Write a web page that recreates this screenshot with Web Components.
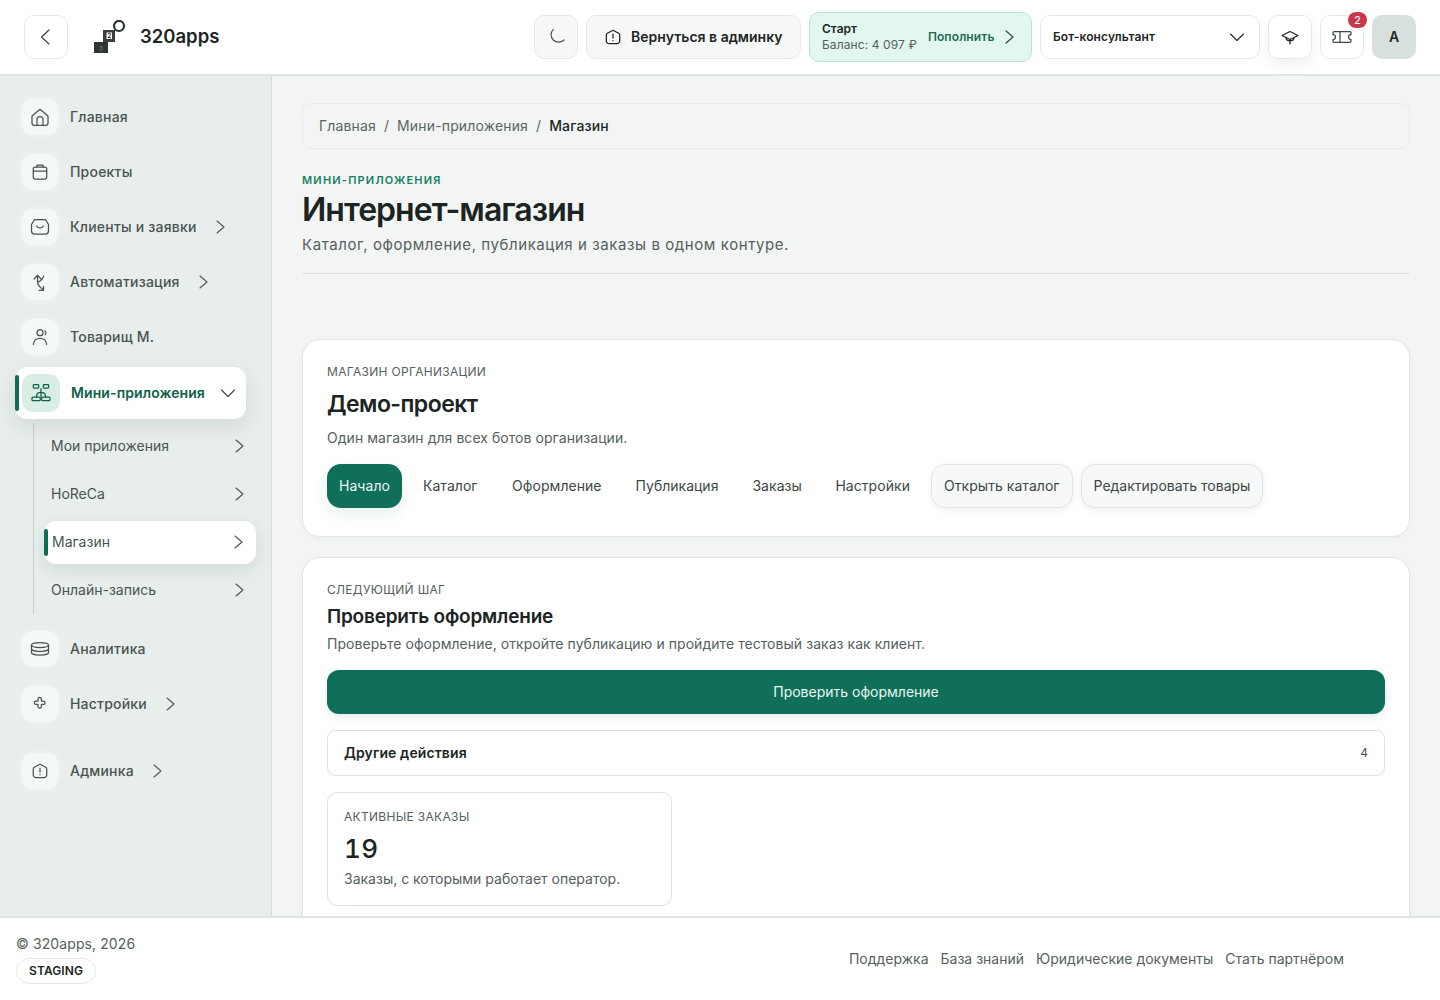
<!DOCTYPE html>
<html lang="ru">
<head>
<meta charset="utf-8">
<title>320apps</title>
<style>
  html, body { margin: 0; height: 100%; }
  body { font-family: Inter, "Noto Sans", sans-serif; color: #1b2422; background: #f2f5f4; }
</style>
</head>
<body>
<app-shell></app-shell>
<script>
// all icons are drawn on a 24 grid, 1 unit = 1px
const svg = (inner, sw = 1.25) => `<svg width="24" height="24" viewBox="0 0 24 24" fill="none" stroke="currentColor" stroke-width="${sw}" stroke-linecap="round" stroke-linejoin="round" style="display:block;flex:none">${inner}</svg>`
const icons = {
  back: '<path d="M15 5l-7.500 7 7.500 7"/>',
  right: '<path d="M9 6l7 6-7 6"/>',
  down: '<path d="M5.500 9l6.500 6.500L18.500 9"/>',
  home: '<path d="M4 11l8-6.700 8 6.700v7a2.300 2.300 0 0 1-2.300 2.300H6.300A2.300 2.300 0 0 1 4 18z"/><path d="M9 20v-5.500a3 3 0 0 1 6 0V20"/>',
  case: '<rect x="5.300" y="7" width="13.400" height="12" rx="2"/><path d="M5.300 11h13.400M9 7V5.200h6V7"/>',
  inbox: '<path d="M6.500 4.500h11l3 5v6.500a3 3 0 0 1-3 3h-11a3 3 0 0 1-3-3V9.500z"/><path d="M8.500 11c1.500 2.500 5.500 2.500 7 0"/>',
  flow: '<path d="M6 9l3.500-3.700L13 9M9.500 5.300V12c0 3 2 5 5.500 7.500"/><path d="M11 20.300h4.500v-4M15.500 6c0 3-2 4.200-5 6"/>',
  user: '<circle cx="12" cy="7.700" r="3"/><path d="M5.300 19.300c.5-4 3.500-6 6.700-6s6.200 2 6.700 6"/><path d="M16.800 6c1.400.5 1.400 3 .4 3.700"/>',
  apps: '<rect x="4.300" y="3.700" width="5.400" height="3.400" rx=".8"/><rect x="14.300" y="3.700" width="5.400" height="3.400" rx=".8"/><rect x="3" y="16" width="8.300" height="3.700" rx="1"/><rect x="12.700" y="16" width="8.300" height="3.700" rx="1"/><path d="M7.500 16c0-3 1.500-4.500 3-4.500h3c1.500 0 3 1.500 3 4.500M12 7.500v8.500"/>',
  db: '<ellipse cx="12" cy="8" rx="8.500" ry="2.500"/><path d="M3.500 8v7.500c0 1.500 3.800 2.700 8.500 2.700s8.500-1.200 8.500-2.700V8M3.500 11.800c0 1.500 3.800 2.700 8.500 2.700s8.500-1.200 8.500-2.700"/>',
  gear: '<path d="M10 9V7a1.700 1.700 0 0 1 3.400 0v2h2a1.700 1.700 0 0 1 0 3.400h-2v2a1.700 1.700 0 0 1-3.400 0v-2H8A1.700 1.700 0 0 1 8 9z"/>',
  admin: '<path d="M12 5.300l5.700 3a2 2 0 0 1 1 1.700v6a2.700 2.700 0 0 1-2.700 2.700H8A2.700 2.700 0 0 1 5.300 16v-6a2 2 0 0 1 1-1.700z"/><path d="M12 9v4M12 15.500v.2"/>',
  spin: '<path d="M9.300 4.300A6.800 6.800 0 1 0 20 15"/>',
  cap: '<path d="M12 6.500l8 4-8 4-8-4z"/><path d="M8 12.700c0 2 2 3 4 3s4-1 4-3M12 14.500V19"/>',
  ticket: '<path d="M4 6.700h16a1 1 0 0 1 1 1v1.800a2.500 2.500 0 0 0 0 5v1.800a1 1 0 0 1-1 1H4a1 1 0 0 1-1-1v-1.800a2.500 2.500 0 0 0 0-5V7.700a1 1 0 0 1 1-1z"/><path d="M10 6.700v10.600"/>'
}

class TopBar extends HTMLElement {
  constructor() {
    super()
    this.attachShadow({ mode: 'open' })
    this.shadowRoot.innerHTML = `
      <style>
        :host { display: flex; align-items: center; height: 74px; flex: none; padding: 0 24px; background: #fff; border-bottom: 2px solid #dfe4e2; position: relative; z-index: 3; }
        .btn { display: flex; align-items: center; justify-content: center; height: 44px; box-sizing: border-box; border: 1px solid #e6e9e8; border-radius: 10px; background: #fff; color: #3d4744; }
        .sq { width: 44px; flex: none; }
        .brand { display: flex; align-items: center; margin-left: 26px; font-size: 18.500px; font-weight: 600; color: #1d2624; gap: 12px; }
        .brand svg { display: block; }
        .brand span { position: relative; top: -1px; }
        .right { display: flex; align-items: center; margin-left: auto; }
        .gray { background: #f6f8f7; }
        .admin { width: 215px; margin-left: 8px; gap: 6px; justify-content: flex-start; padding-left: 14px; font-size: 14px; font-weight: 600; color: #1d2624; white-space: nowrap; }
        .plan { display: flex; align-items: center; width: 223px; height: 50px; margin-left: 8px; box-sizing: border-box; padding: 0 12px; background: #e2f7f0; border: 1px solid #b5e6d5; border-radius: 10px; white-space: nowrap; }
        .plan b { display: block; font-size: 12px; font-weight: 600; line-height: 16px; color: #1d2624; }
        .plan span { display: block; font-size: 12px; line-height: 16px; color: #56605d; letter-spacing: .1px; }
        .plan i { font-style: normal; font-size: 12px; font-weight: 600; color: #1f6b52; margin-left: 11px; margin-right: 3px; margin-bottom: 1px; letter-spacing: .1px; }
        .plan svg { color: #3d4744; }
        .select { width: 220px; margin-left: 8px; justify-content: space-between; padding: 0 10px 0 12px; font-size: 12px; font-weight: 600; color: #1d2624; letter-spacing: .1px; }
        .nudge { margin-bottom: 1px; }
        .soft { box-shadow: 0 6px 14px rgba(30, 50, 45, .07); margin-left: 8px; color: #1d2624; }
        .bell { margin-left: 8px; position: relative; }
        .bell em { position: absolute; top: -4px; right: -4px; width: 19px; height: 16px; border-radius: 8px; background: #c8374a; color: #fff; font-style: normal; font-size: 10.500px; font-weight: 500; display: flex; align-items: center; justify-content: center; }
        .avatar { width: 44px; height: 44px; margin-left: 8px; border-radius: 10px; background: #d8e0dd; display: flex; align-items: center; justify-content: center; font-size: 14px; font-weight: 600; color: #1d2624; box-sizing: border-box; padding-bottom: 1px; }
      </style>
      <div class="btn sq">${svg(icons.back)}</div>
      <div class="brand">
        <svg width="34" height="34" viewBox="0 0 34 34">
          <circle cx="25" cy="6" r="5" fill="none" stroke="#2b3230" stroke-width="2.200"/>
          <path d="M9 10h12v12H9z" fill="#3a3f3e"/>
          <rect x="12.500" y="12.500" width="5.500" height="6.500" fill="#fff"/>
          <text x="15.200" y="18.200" font-size="6.500" font-family="Inter" text-anchor="middle" fill="#222">2</text>
          <rect x="0" y="22" width="14" height="11" fill="#2f3433"/>
          <text x="7" y="30.500" font-size="6" font-family="Inter" text-anchor="middle" fill="#6e7472">3</text>
        </svg>
        <span>320apps</span>
      </div>
      <div class="right">
        <div class="btn sq gray" style="color:#4b5552">${svg(icons.spin, 1.200)}</div>
        <div class="btn gray admin"><span style="color:#1d2624;display:flex">${svg(icons.admin)}</span><span class="nudge">Вернуться в админку</span></div>
        <div class="plan">
          <div><b>Старт</b><span>Баланс: 4 097 ₽</span></div>
          <i>Пополнить</i>${svg(icons.right)}
        </div>
        <div class="btn select"><span class="nudge">Бот-консультант</span>${svg(icons.down, 1.100)}</div>
        <div class="btn sq soft">${svg(icons.cap)}</div>
        <div class="btn sq bell">${svg(icons.ticket)}<em>2</em></div>
        <div class="avatar">А</div>
      </div>
    `
  }
}
customElements.define('top-bar', TopBar)

class NavItem extends HTMLElement {
  constructor() {
    super()
    this.attachShadow({ mode: 'open' })
  }
  connectedCallback() {
    const icon = this.getAttribute('icon')
    const arrow = this.getAttribute('arrow')
    this.shadowRoot.innerHTML = `
      <style>
        :host { display: flex; align-items: center; height: 47px; margin-left: 22px; font-size: 14px; font-weight: 500; color: #4a5451; letter-spacing: .2px; }
        .ico { width: 36px; height: 36px; flex: none; border-radius: 11px; background: #f4f8f6; display: flex; align-items: center; justify-content: center; color: #4a5451; margin-right: 12px; box-shadow: 0 0 8px rgba(255,255,255,.5); }
        .arr { display: flex; margin-left: 11px; color: #4f5956; }
        :host([active]) { position: relative; height: 52px; width: 231px; margin-left: 15px; box-sizing: border-box; padding-left: 7px; background: #fff; border-radius: 12px; font-weight: 600; color: #11614a; letter-spacing: .1px; box-shadow: 0 8px 20px rgba(30,50,45,.1); }
        :host([active])::before { content: ""; position: absolute; left: 0; top: 8px; bottom: 8px; width: 4px; background: #0f6b53; border-radius: 2px; }
        :host([active]) .ico { width: 38px; height: 38px; margin-right: 11px; background: #d9ece6; color: #11614a; box-shadow: none; }
        :host([active]) .lab { margin-bottom: 2px; }
        :host([active]) .arr { color: #3d4744; }
      </style>
      <div class="ico">${svg(icons[icon])}</div>
      <span class="lab"><slot></slot></span>
      ${arrow ? `<span class="arr">${svg(icons[arrow], 1.100)}</span>` : ''}
    `
  }
}
customElements.define('nav-item', NavItem)

class SubItem extends HTMLElement {
  constructor() {
    super()
    this.attachShadow({ mode: 'open' })
    this.shadowRoot.innerHTML = `
      <style>
        :host { display: flex; align-items: center; justify-content: space-between; height: 42px; margin-bottom: 6px; padding: 0 0 0 17px; box-sizing: border-box; width: 217px; font-size: 14px; color: #4a5451; position: relative; border-radius: 12px; }
        :host([active]) { width: 212px; height: 43px; background: #fff; padding: 0 6px 3px 8px; margin: 7px 0 4px 10px; box-shadow: 0 6px 16px rgba(30,50,45,.1); }
        :host([active])::before { content: ""; position: absolute; left: 0; top: 8px; bottom: 8px; width: 4px; background: #0f6b53; border-radius: 2px; }
        span { display: flex; color: #4a5451; margin-top: 2px; }
      </style>
      <slot></slot>
      <span>${svg(icons.right, 1.100)}</span>
    `
  }
}
customElements.define('sub-item', SubItem)

class SideNav extends HTMLElement {
  constructor() {
    super()
    this.attachShadow({ mode: 'open' })
    this.shadowRoot.innerHTML = `
      <style>
        :host { display: flex; flex-direction: column; width: 272px; flex: none; box-sizing: border-box; padding-top: 17px; background: #e7eeeb; border-right: 1px solid #d5dbd9; }
        .list { display: flex; flex-direction: column; gap: 8px; }
        .subs { margin: 4px 0 11px 33px; padding-top: 1px; border-left: 1px solid #c9d0ce; width: 230px; }
        sub-item:last-child { margin-bottom: 4px; }
        .last { margin-top: 12px; }
      </style>
      <div class="list">
        <nav-item icon="home">Главная</nav-item>
        <nav-item icon="case">Проекты</nav-item>
        <nav-item icon="inbox" arrow="right">Клиенты и заявки</nav-item>
        <nav-item icon="flow" arrow="right">Автоматизация</nav-item>
        <nav-item icon="user">Товарищ М.</nav-item>
      </div>
      <nav-item icon="apps" arrow="down" active style="margin-top:7px">Мини-приложения</nav-item>
      <div class="subs">
        <sub-item>Мои приложения</sub-item>
        <sub-item>HoReCa</sub-item>
        <sub-item active>Магазин</sub-item>
        <sub-item>Онлайн-запись</sub-item>
      </div>
      <div class="list">
        <nav-item icon="db">Аналитика</nav-item>
        <nav-item icon="gear" arrow="right">Настройки</nav-item>
        <nav-item class="last" icon="admin" arrow="right">Админка</nav-item>
      </div>
    `
  }
}
customElements.define('side-nav', SideNav)

class PageHead extends HTMLElement {
  constructor() {
    super()
    this.attachShadow({ mode: 'open' })
    this.shadowRoot.innerHTML = `
      <style>
        :host { display: block; }
        .crumbs { display: flex; align-items: center; gap: 8px; height: 46px; box-sizing: border-box; padding: 0 16px 2px; border: 1px solid #e8eceb; border-radius: 10px; font-size: 14px; color: #5b6562; letter-spacing: .15px; }
        .crumbs b { font-weight: 500; color: #1d2624; }
        .eyebrow { margin-top: 24px; font-size: 11px; line-height: 14px; font-weight: 600; letter-spacing: 1.200px; text-transform: uppercase; color: #1a8064; }
        h1 { margin: 3px 0 0; font-size: 32px; line-height: 40px; font-weight: 600; letter-spacing: -.96px; color: #1b2422; }
        p { margin: 3px 0 0; font-size: 15px; line-height: 24px; color: #56605d; letter-spacing: .58px; }
        hr { margin: 16px 0 0; border: 0; border-top: 1px solid #dde2e0; }
      </style>
      <div class="crumbs"><span>Главная</span><span>/</span><span>Мини-приложения</span><span>/</span><b>Магазин</b></div>
      <div class="eyebrow">Мини-приложения</div>
      <h1>Интернет-магазин</h1>
      <p>Каталог, оформление, публикация и заказы в одном контуре.</p>
      <hr>
    `
  }
}
customElements.define('page-head', PageHead)

class PanelCard extends HTMLElement {
  constructor() {
    super()
    this.attachShadow({ mode: 'open' })
    this.shadowRoot.innerHTML = `
      <style>
        :host { display: block; flex: none; box-sizing: border-box; padding: 24px; background: #fff; border: 1px solid #e1e6e4; border-radius: 18px; box-shadow: 0 2px 6px rgba(30,50,45,.04); }
      </style>
      <slot></slot>
    `
  }
}
customElements.define('panel-card', PanelCard)

class StoreTabs extends HTMLElement {
  constructor() {
    super()
    this.attachShadow({ mode: 'open' })
    this.shadowRoot.innerHTML = `
      <style>
        :host { display: flex; align-items: center; font-size: 14px; color: #3d4744; letter-spacing: .05px; }
        div { height: 44px; display: flex; align-items: center; box-sizing: border-box; padding: 0 12px 1px; border-radius: 14px; margin-right: 10px; }
        .on { background: #0f6f58; color: #e9f6f2; box-shadow: 0 6px 14px rgba(15,111,88,.1); margin-right: 9px; }
        .out { background: #f7f9f8; border: 1px solid #e1e6e4; box-shadow: 0 2px 6px rgba(30,50,45,.08); margin-right: 8px; }
      </style>
      <div class="on">Начало</div>
      <div style="margin-right:10.500px">Каталог</div>
      <div>Оформление</div>
      <div style="margin-right:10px;letter-spacing:0">Публикация</div>
      <div style="margin-right:9.500px">Заказы</div>
      <div style="margin-right:9px">Настройки</div>
      <div class="out">Открыть каталог</div>
      <div class="out" style="letter-spacing:0">Редактировать товары</div>
    `
  }
}
customElements.define('store-tabs', StoreTabs)

class MoreRow extends HTMLElement {
  constructor() {
    super()
    this.attachShadow({ mode: 'open' })
    this.shadowRoot.innerHTML = `
      <style>
        :host { display: flex; align-items: center; justify-content: space-between; height: 46px; margin-top: 16px; box-sizing: border-box; padding: 0 16px 1px; border: 1px solid #dde2e0; border-radius: 8px; font-size: 14px; font-weight: 600; color: #1d2624; letter-spacing: .1px; }
        span { font-size: 12px; font-weight: 400; color: #4a5451; }
      </style>
      <slot></slot><span>4</span>
    `
  }
}
customElements.define('more-row', MoreRow)

class StatCard extends HTMLElement {
  constructor() {
    super()
    this.attachShadow({ mode: 'open' })
    this.shadowRoot.innerHTML = `
      <style>
        :host { display: block; width: 345px; height: 114px; margin-top: 16px; box-sizing: border-box; padding: 16px 16px 0; border: 1px solid #dde2e0; border-radius: 10px; }
        .lab { font-size: 12px; line-height: 16px; color: #56605d; letter-spacing: .3px; text-transform: uppercase; }
        .num { margin-top: 7px; font-size: 26px; line-height: 34px; font-weight: 500; color: #1b2422; letter-spacing: .5px; font-variant-numeric: tabular-nums; }
        .txt { margin-top: 3px; font-size: 14px; line-height: 20px; color: #56605d; }
      </style>
      <div class="lab"><slot name="label"></slot></div>
      <div class="num"><slot name="num"></slot></div>
      <div class="txt"><slot name="text"></slot></div>
    `
  }
}
customElements.define('stat-card', StatCard)

class StoreMain extends HTMLElement {
  constructor() {
    super()
    this.attachShadow({ mode: 'open' })
    this.shadowRoot.innerHTML = `
      <style>
        :host { display: flex; flex-direction: column; flex: 1; min-width: 0; box-sizing: border-box; padding: 27px 30px 0; overflow: hidden; background: #f2f5f4; }
        .over { font-size: 12px; line-height: 16px; color: #56605d; letter-spacing: .3px; text-transform: uppercase; }
        h2 { margin: 8px 0 0; font-size: 23px; line-height: 32px; font-weight: 600; letter-spacing: -.55px; color: #1b2422; }
        h3 { margin: 5px 0 0; font-size: 19px; line-height: 28px; font-weight: 600; letter-spacing: -.2px; color: #1b2422; }
        p { margin: 8px 0 0; font-size: 14px; line-height: 20px; color: #56605d; letter-spacing: .05px; }
        h3 + p { margin-top: 3px; }
        store-tabs { margin-top: 16px; }
        .primary { display: flex; align-items: center; justify-content: center; height: 44px; margin-top: 16px; box-sizing: border-box; padding-bottom: 1px; background: #0f6f58; border-radius: 12px; color: #e9f6f2; font-size: 14px; box-shadow: 0 3px 8px rgba(15,111,88,.12); }
        .one { margin-top: 65px; height: 198px; }
        .two { margin-top: 20px; padding-top: 24px; height: 400px; }
      </style>
      <page-head></page-head>
      <panel-card class="one">
        <div class="over">Магазин организации</div>
        <h2>Демо-проект</h2>
        <p>Один магазин для всех ботов организации.</p>
        <store-tabs></store-tabs>
      </panel-card>
      <panel-card class="two">
        <div class="over">Следующий шаг</div>
        <h3>Проверить оформление</h3>
        <p>Проверьте оформление, откройте публикацию и пройдите тестовый заказ как клиент.</p>
        <div class="primary">Проверить оформление</div>
        <more-row>Другие действия</more-row>
        <stat-card>
          <span slot="label">Активные заказы</span>
          <span slot="num">19</span>
          <span slot="text">Заказы, с которыми работает оператор.</span>
        </stat-card>
      </panel-card>
    `
  }
}
customElements.define('store-main', StoreMain)

class PageFooter extends HTMLElement {
  constructor() {
    super()
    this.attachShadow({ mode: 'open' })
    this.shadowRoot.innerHTML = `
      <style>
        :host { display: flex; justify-content: space-between; align-items: center; flex: none; height: 84px; box-sizing: border-box; padding: 0 96px 1px 16px; background: #fff; border-top: 2px solid #dfe4e2; font-size: 14px; color: #56605d; }
        .tag { display: inline-flex; align-items: center; height: 26px; box-sizing: border-box; margin-top: 4px; padding: 0 12px; border: 1px solid #e6e9e8; border-radius: 13px; font-size: 12px; font-weight: 600; color: #1d2624; letter-spacing: .1px; }
        .copy { line-height: 20px; letter-spacing: .1px; }
        nav { display: flex; gap: 12px; margin-bottom: 1px; }
      </style>
      <div>
        <div class="copy">© 320apps, 2026</div>
        <div class="tag">STAGING</div>
      </div>
      <nav><span>Поддержка</span><span>База знаний</span><span>Юридические документы</span><span>Стать партнёром</span></nav>
    `
  }
}
customElements.define('page-footer', PageFooter)

class AppShell extends HTMLElement {
  constructor() {
    super()
    this.attachShadow({ mode: 'open' })
    this.shadowRoot.innerHTML = `
      <style>
        :host { display: flex; flex-direction: column; height: 100vh; overflow: hidden; }
        .mid { display: flex; flex: 1; min-height: 0; }
      </style>
      <top-bar></top-bar>
      <div class="mid"><side-nav></side-nav><store-main></store-main></div>
      <page-footer></page-footer>
    `
  }
}
customElements.define('app-shell', AppShell)
</script>
</body>
</html>
